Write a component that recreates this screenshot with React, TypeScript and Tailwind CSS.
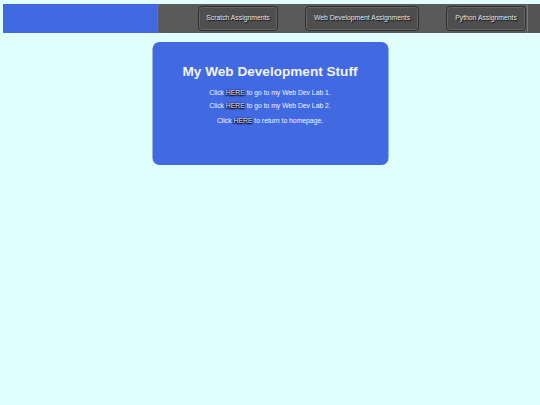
import React from "react";

const here = "text-[#e8e8ff] [text-shadow:0_1px_2px_#000,0_1px_1px_#000,0_0_2px_#000]";

export default function App() {
  return (
    <div className="min-h-[405px] w-[540px] bg-[#e0ffff] pt-[4px] pl-[3px] font-['Liberation_Sans',Arial,sans-serif]">
      <div className="flex h-[29px] bg-[#4169e1]">
        <nav className="ml-auto flex h-full w-[383px] items-center rounded-l-[4px] bg-[#5a5a5a] pl-[41px] shadow-[inset_1px_0_0_#777]">
          <div className="flex h-[25px] w-[80px] items-center justify-center rounded-[4px] border border-[#2e2e2e] bg-[#4e4e4e] text-[6.8px] text-[#ececec] shadow-[inset_0_0_0_1px_#666] [text-shadow:1px_1px_1px_#000]">
            Scratch Assignments
          </div>
          <div className="ml-[27px] flex h-[25px] w-[114px] items-center justify-center rounded-[4px] border border-[#2e2e2e] bg-[#4e4e4e] text-[6.8px] text-[#ececec] shadow-[inset_0_0_0_1px_#666] [text-shadow:1px_1px_1px_#000]">
            Web Development Assignments
          </div>
          <div className="ml-[27px] flex h-[25px] w-[80px] items-center justify-center rounded-[4px] border border-[#2e2e2e] bg-[#4e4e4e] text-[6.8px] text-[#ececec] shadow-[inset_0_0_0_1px_#666] [text-shadow:1px_1px_1px_#000]">
            Python Assignments
          </div>
          <div className="ml-[1px] h-full flex-1 border-l border-[#777] bg-[#555]" />
        </nav>
      </div>
      <div className="mx-auto mt-[9px] h-[123px] w-[236px] -translate-x-[1.5px] rounded-[7px] bg-[#4169e1] pt-[22px] text-center text-[#f4f4ff]">
        <h1 className="text-[13.6px] font-bold leading-[16px]">My Web Development Stuff</h1>
        <p className="mt-[6px] text-[6.8px] leading-[13px]">
          Click <span className={here}>HERE</span> to go to my Web Dev Lab 1.
        </p>
        <p className="text-[6.8px] leading-[13px]">
          Click <span className={here}>HERE</span> to go to my Web Dev Lab 2.
        </p>
        <p className="mt-[2px] text-[6.8px] leading-[13px]">
          Click <span className={here}>HERE</span> to return to homepage.
        </p>
      </div>
    </div>
  );
}
